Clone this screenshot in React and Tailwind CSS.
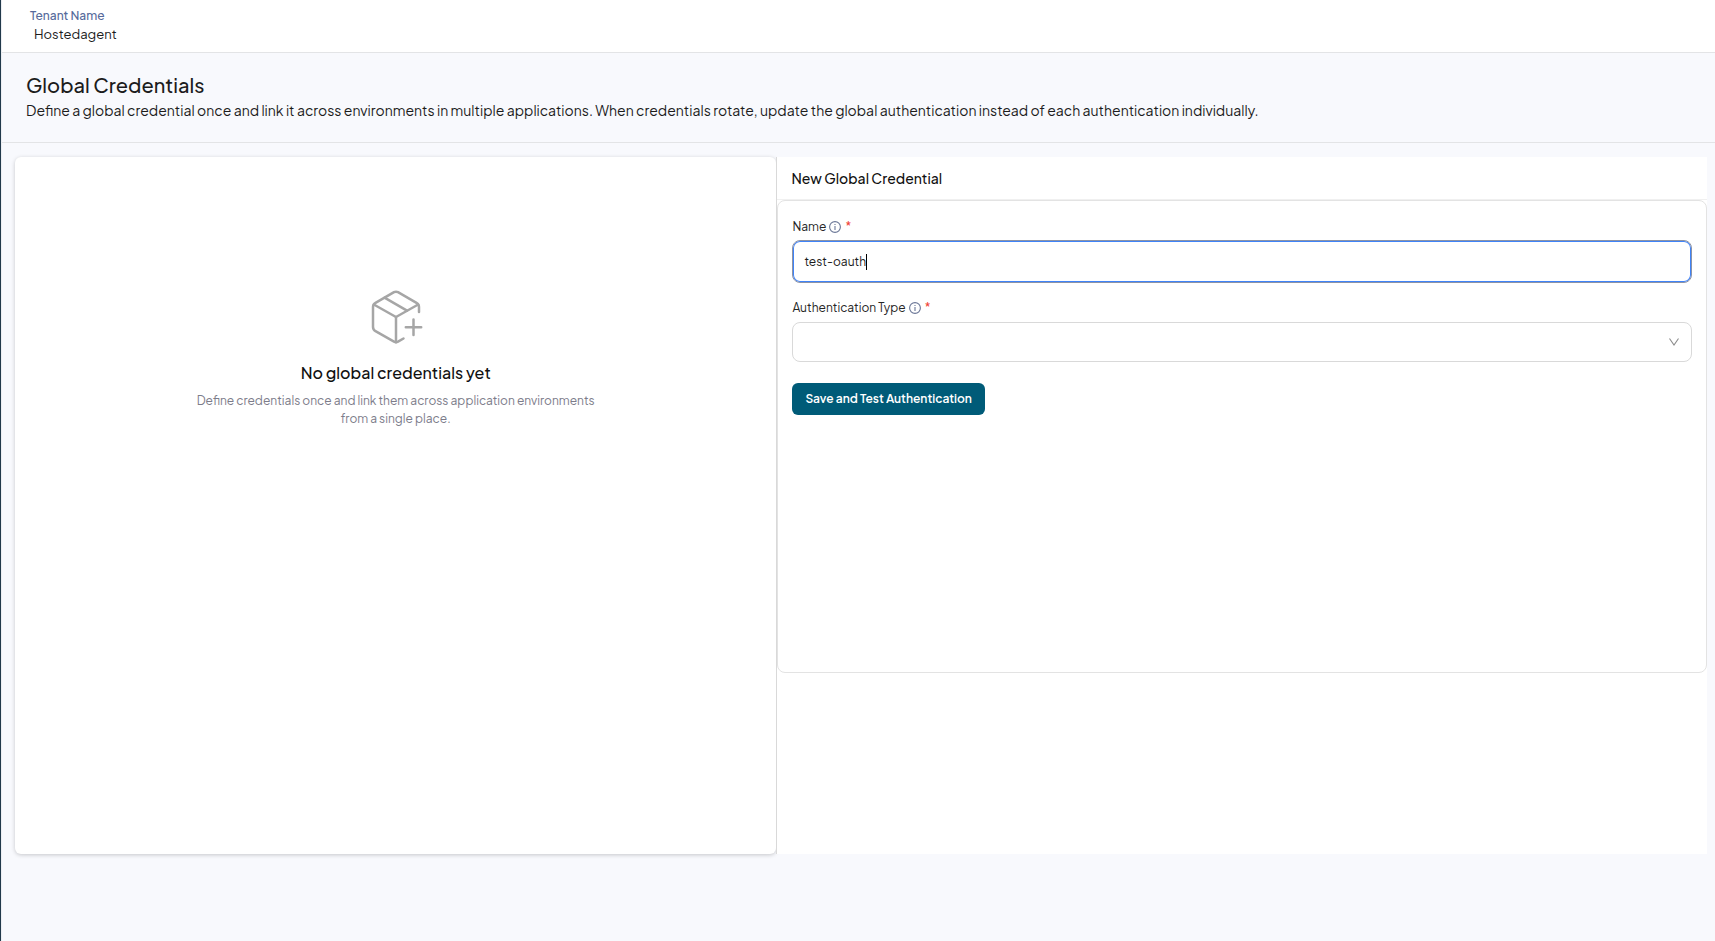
import { useState } from 'react';

function InfoIcon() {
  return (
    <svg className="h-3 w-3 text-[#6b7797]" viewBox="0 0 12 12" fill="none" stroke="currentColor" aria-hidden="true">
      <circle cx="6" cy="6" r="5.4" strokeWidth="1.1" />
      <path d="M6 5v4" strokeWidth="1.1" />
      <path d="M6 2.9v1.2" strokeWidth="1.1" />
    </svg>
  );
}

function BoxPlusIcon() {
  return (
    <svg
      className="h-14 w-14 text-[#a6a6a6]"
      viewBox="0 0 56 56"
      fill="none"
      stroke="currentColor"
      strokeWidth="2.5"
      strokeLinecap="round"
      strokeLinejoin="round"
      aria-hidden="true"
    >
      <path d="M35.5 49.5L30 52.7Q28 53.8 26 52.7L7.5 42.2Q5 40.7 5 38V18Q5 15.2 7.5 13.8L26 3.2Q28 2.1 30 3.2L48.5 13.8Q51 15.2 51 18V23" />
      <path d="M5.8 15.5L28 28L50.2 15.5" />
      <path d="M28 28V53.3" />
      <path d="M16.5 8.7L39 21.6" />
      <path d="M45.5 30.5V46M37.8 38.2H53.2" />
    </svg>
  );
}

function FieldLabel({ htmlFor, children }) {
  return (
    <label htmlFor={htmlFor} className="flex h-5 items-center text-xs text-[#262626]">
      {children}
      <span className="ml-[3px] pb-px">
        <InfoIcon />
      </span>
      <span className="ml-1 text-[#f04438]">*</span>
    </label>
  );
}

function App() {
  const [name, setName] = useState('test-oauth');

  return (
    <div className="border-l border-[#21394b] font-['Plus_Jakarta_Sans','Inter',sans-serif] text-[#1c1c1c]">
      <div className="flex min-h-screen flex-col border-l border-[#eceef2] bg-[#f8f9fd]">
        {/* Tenant bar */}
        <header className="border-b border-[#e3e4e6] bg-white px-7 pt-2 pb-2">
          <p className="text-xs leading-4 font-medium text-[#566a9b]">Tenant Name</p>
          <p className="pt-0.5 pb-0.5 pl-1 text-[13px] leading-4">Hostedagent</p>
        </header>

        {/* Page heading */}
        <div className="border-b border-[#e3e4e6] px-6 pt-5 pb-5">
          <h1 className="text-xl leading-6 font-medium">Global Credentials</h1>
          <p className="mt-px text-sm leading-6">
            Define a global credential once and link it across environments in multiple applications. When credentials
            rotate, update the global authentication instead of each authentication individually.
          </p>
        </div>

        <main className="mt-3.5 mr-2 mb-[87px] ml-[13px] flex flex-1">
          {/* Empty list */}
          <section className="flex w-[45%] flex-col items-center rounded-md bg-white pt-33 text-center shadow-[0_1px_4px_rgba(0,0,0,0.2)]">
            <BoxPlusIcon />
            <h2 className="mt-4 text-base leading-6 font-medium text-[#111111]">No global credentials yet</h2>
            <p className="mt-[7px] max-w-105 text-xs leading-[18px] text-[#7c7c8a]">
              Define credentials once and link them across application environments from a single place.
            </p>
          </section>

          {/* Credential form */}
          <section className="flex-1 border-l border-[#d9d9d9] bg-white">
            <h2 className="border-b border-[#f0f0f0] px-3.5 py-2.5 text-sm leading-[22px] font-medium text-[#111111]">
              New Global Credential
            </h2>
            <form
              className="min-h-[473px] rounded-lg border border-[#e3e3e3] px-3.5 pt-4"
              onSubmit={(e) => e.preventDefault()}
            >
              <FieldLabel htmlFor="name">Name</FieldLabel>
              <div className="mt-[3px] flex h-[43px] items-center rounded-lg border border-[#8d93a5] bg-white px-[11px] inset-ring-1 inset-ring-[#3f83f8]">
                <input
                  id="name"
                  type="text"
                  required
                  value={name}
                  onChange={(e) => setName(e.target.value)}
                  className="field-sizing-content text-xs leading-4 caret-transparent outline-none"
                />
                <span className="h-4 w-px bg-black" />
              </div>

              <div className="mt-[15px]">
                <FieldLabel htmlFor="auth-type">Authentication Type</FieldLabel>
              </div>
              <div className="relative mt-1">
                <select
                  id="auth-type"
                  required
                  className="block h-10 w-full appearance-none rounded-lg border border-[#d9d9d9] bg-white px-3 text-xs outline-none"
                >
                  <option value=""></option>
                </select>
                <svg
                  className="pointer-events-none absolute top-3.5 right-3 h-3 w-3 text-[#8c8c8c]"
                  viewBox="0 0 12 12"
                  fill="none"
                  stroke="currentColor"
                  strokeWidth="1.1"
                  aria-hidden="true"
                >
                  <path d="M1.5 2.5L6 9L10.5 2.5" />
                </svg>
              </div>

              <button
                type="submit"
                className="mt-[21px] h-8 rounded-md bg-[#005b78] px-[13px] text-xs font-semibold text-white"
              >
                Save and Test Authentication
              </button>
            </form>
          </section>
        </main>
      </div>
    </div>
  );
}

export default App;
